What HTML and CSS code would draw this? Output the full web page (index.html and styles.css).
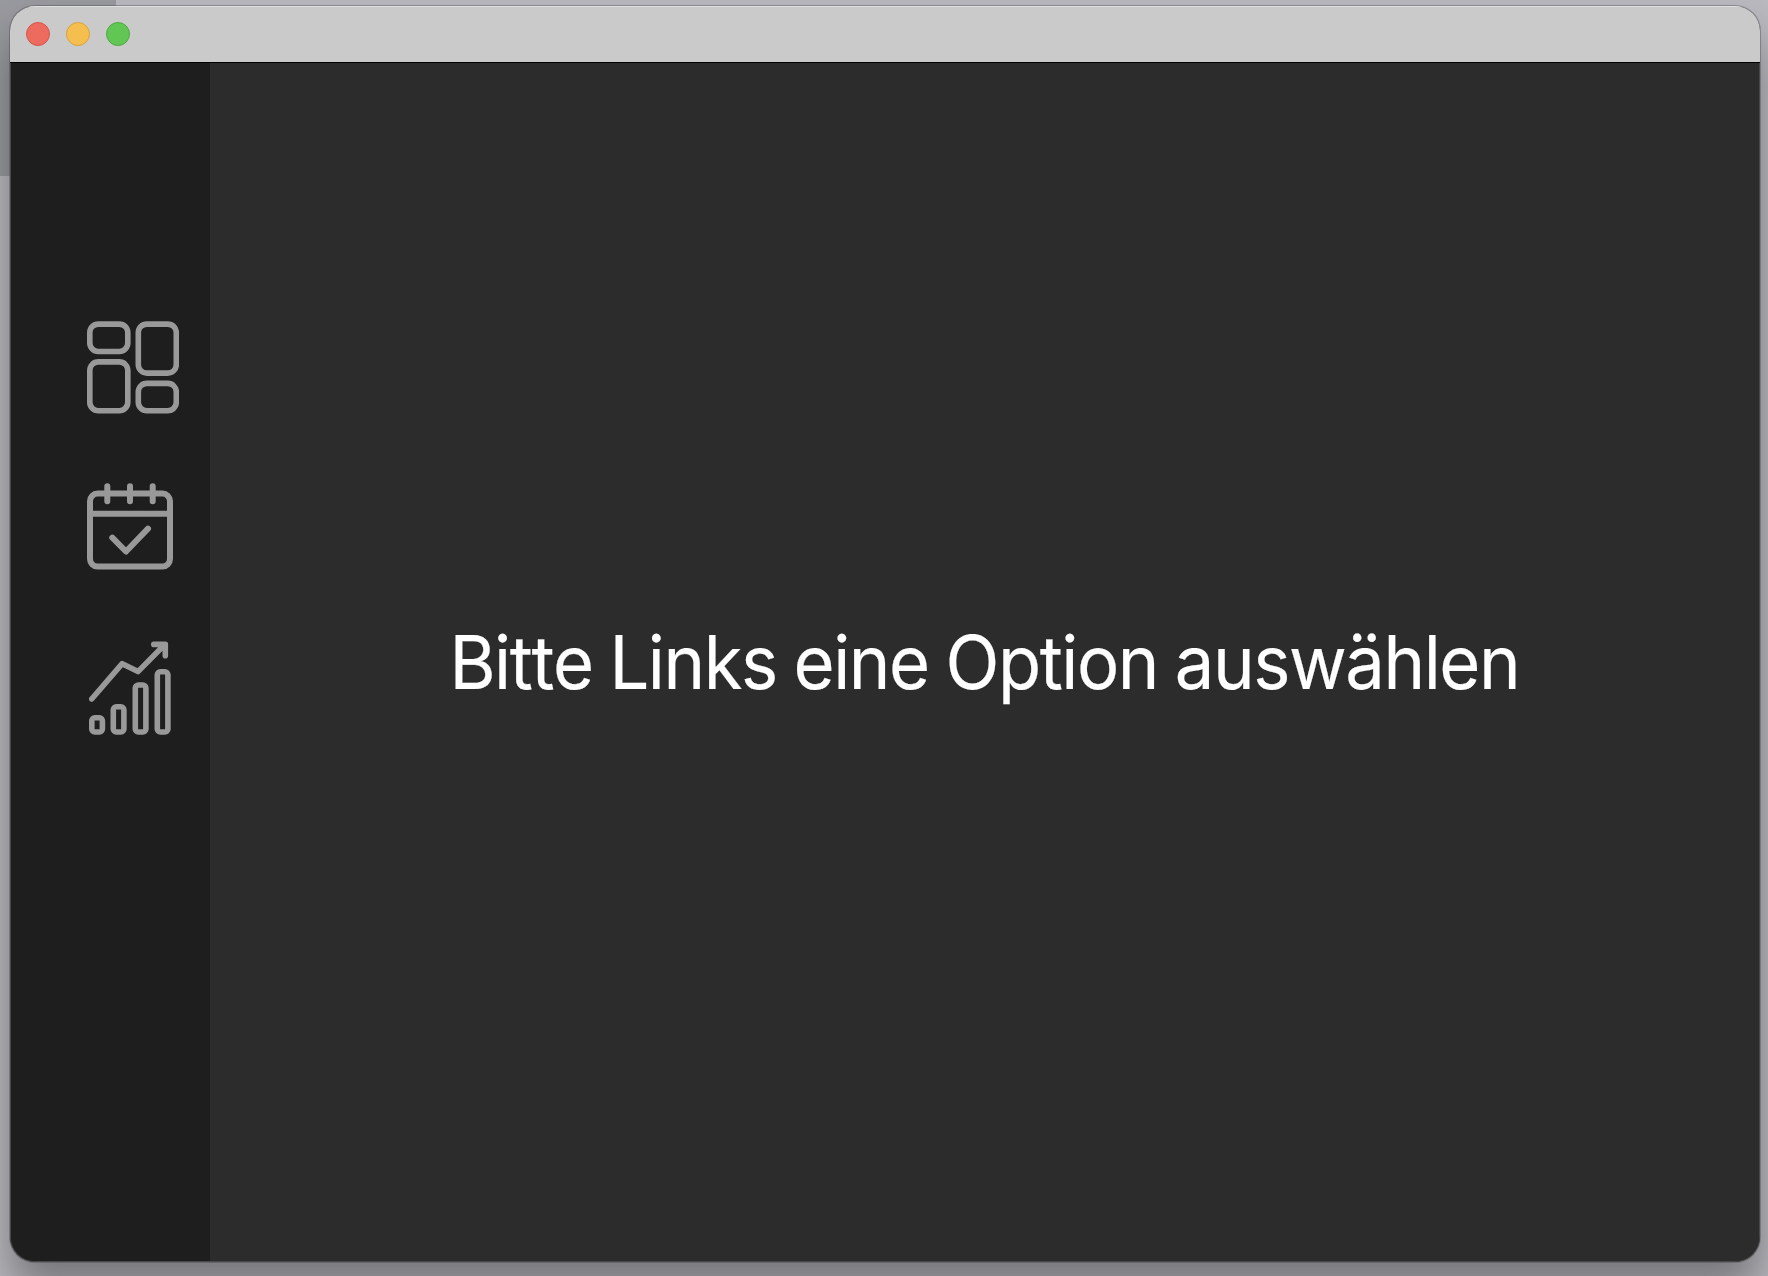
FILE: index.html
```html
<!DOCTYPE html>
<html lang="de">
<head>
<meta charset="utf-8">
<title>Übersicht</title>
<link rel="stylesheet" href="styles.css">
</head>
<body>
<div class="window">
  <header class="titlebar">
    <span class="light close"></span>
    <span class="light minimize"></span>
    <span class="light maximize"></span>
  </header>
  <div class="content">
    <nav class="sidebar">
      <svg class="icon dashboard" width="92" height="93" viewBox="0 0 92 93" stroke-width="5.6">
        <rect x="2.8" y="3.1" width="38" height="27.4" rx="8.5"/>
        <rect x="51.3" y="3.1" width="38" height="49" rx="8.5"/>
        <rect x="2.8" y="40.9" width="38" height="48.9" rx="8.5"/>
        <rect x="51.3" y="62.4" width="38" height="27.4" rx="8.5"/>
      </svg>
      <svg class="icon calendar" width="86" height="87" viewBox="0 0 86 87" stroke-width="6">
        <rect x="3" y="10.6" width="80" height="73" rx="7.5"/>
        <path d="M3 30.7H83M20.3 3.2V18.2M43 3.2V18.2M65.7 3.2V18.2M25.3 54.7L39 68.5L61 45.7"/>
      </svg>
      <svg class="icon chart" width="82" height="94" viewBox="0 0 82 94" stroke-width="5.6">
        <path d="M2.7 58L33.2 22.7L49 30.6L75.5 3.8M64.8 3.4H76.3V14.8"/>
        <rect x="2.8" y="76.8" width="10.6" height="14.2" rx="3"/>
        <rect x="24.3" y="65.8" width="10.6" height="25.2" rx="3"/>
        <rect x="46.3" y="44" width="10.6" height="47" rx="3"/>
        <rect x="68.3" y="30.8" width="10.6" height="60.2" rx="3"/>
      </svg>
    </nav>
    <main class="main">
      <p class="hint">Bitte Links eine Option auswählen</p>
    </main>
  </div>
</div>
</body>
</html>
```
FILE: styles.css
```css
* { box-sizing: border-box; }

body {
  margin: 0;
  width: 1768px;
  height: 1276px;
  padding: 6px 8px 14px 10px;
  overflow: hidden;
  background: linear-gradient(#999a9f, #999a9f) 0 0 / 116px 176px no-repeat, #bab9bf;
  font-family: Inter, "Liberation Sans", sans-serif;
}

.window {
  height: 1256px;
  display: flex;
  flex-direction: column;
  overflow: hidden;
  border-radius: 25px;
  background: #2c2c2c;
  box-shadow: 0 0 0 1px rgba(60, 60, 65, 0.35), 0 28px 44px rgba(0, 0, 0, 0.36);
}

.titlebar {
  height: 57px;
  flex: none;
  display: flex;
  align-items: flex-start;
  gap: 16px;
  padding: 16px 16px 0;
  background: #cacaca;
  border-bottom: 1px solid #000;
  box-shadow: inset 0 1px #e0dfe0;
}

.light {
  width: 24px;
  height: 24px;
  border-radius: 50%;
  border: 1px solid;
}

.close { background: #ed6a5e; border-color: #d2564b; }
.minimize { background: #f5bf4f; border-color: #d8a140; }
.maximize { background: #62c655; border-color: #51a842; }

.content {
  flex: 1;
  display: flex;
  min-height: 0;
  overflow: hidden;
  border: solid #48484b;
  border-width: 0 1px 1px;
  border-radius: 0 0 25px 25px;
}

.sidebar {
  width: 199px;
  flex: none;
  display: flex;
  flex-direction: column;
  padding: 258px 0 0 76px;
  background: #1e1e1e;
}

.icon {
  flex: none;
  fill: none;
  stroke: #999;
  stroke-linecap: round;
  stroke-linejoin: round;
}

.calendar { margin-top: 69px; }
.chart { margin: 71px 0 0 2px; }

.main {
  flex: 1;
  display: flex;
  align-items: center;
  justify-content: center;
  background: #2c2c2c;
}

.hint {
  margin: 0;
  color: #fff;
  font-size: 74px;
  line-height: 96px;
  letter-spacing: -1.5px;
  word-spacing: -1.8px;
  font-kerning: none;
  white-space: nowrap;
  -webkit-text-stroke: 0.2px #fff;
  transform: scaleX(0.953);
}
```
